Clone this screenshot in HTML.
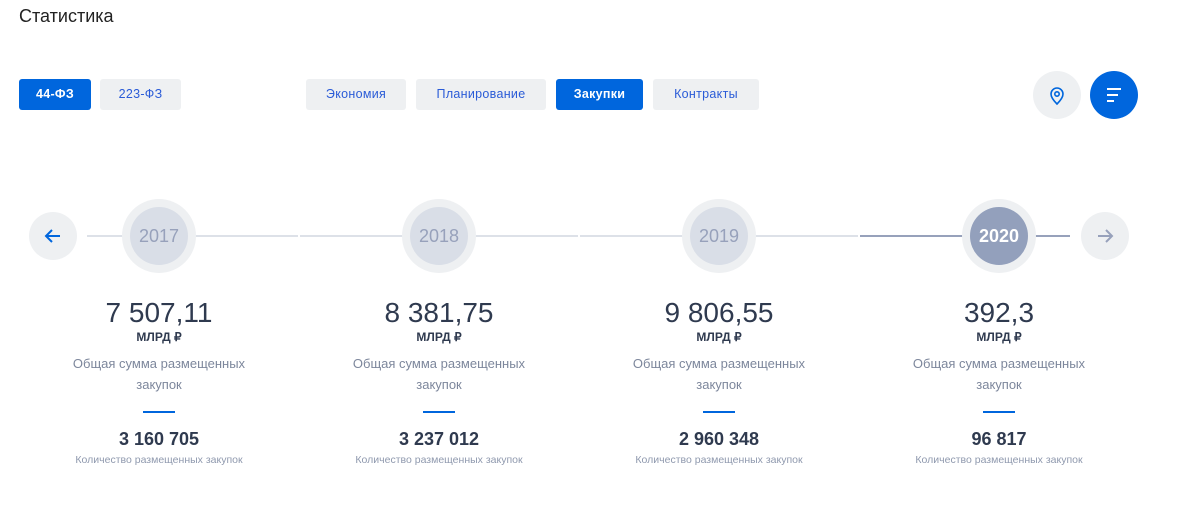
<!DOCTYPE html><html><head><style>
body{margin:0;width:1188px;height:506px;background:#fff;font-family:"Liberation Sans",Arial,sans-serif;position:relative;overflow:hidden}
.a{position:absolute}
.btn{position:absolute;top:79px;height:31px;line-height:31px;text-align:center;font-size:12.5px;border-radius:3px;background:#eef0f2;color:#2a5bd7;letter-spacing:0.3px}
.on{background:#0066dd;color:#fff;font-weight:bold}
.rc{position:absolute;width:48px;height:48px;border-radius:50%;background:#eef0f2}
.ln{position:absolute;top:235px;height:2px;background:#dde1e8}
.yo{position:absolute;top:199px;width:74px;height:74px;border-radius:50%;background:#eef0f2}
.yi{position:absolute;left:8px;top:8px;width:58px;height:58px;border-radius:50%;background:#d9dee7;color:#97a1bb;font-size:18px;line-height:58px;text-align:center}
.col{position:absolute;top:296px;width:280px;text-align:center}
.v{font-size:28px;color:#2f3a4f;line-height:34px}
.u{font-size:12px;font-weight:bold;color:#2f3a4f}
.d{font-size:13px;color:#7d879c;line-height:21px;margin-top:9px}
.bar{width:32px;height:2px;background:#0066dd;margin:16px auto 0}
.n{font-size:18px;font-weight:bold;color:#2f3a4f;margin-top:16px}
.c{font-size:10.5px;color:#8f99ae;margin-top:4px}
</style></head><body>
<div class="a" style="left:19px;top:6px;font-size:18px;color:#222">Статистика</div>
<div class="btn on" style="left:19px;width:72px">44-ФЗ</div>
<div class="btn" style="left:100px;width:81px">223-ФЗ</div>
<div class="btn" style="left:306px;width:100px">Экономия</div>
<div class="btn" style="left:416px;width:130px">Планирование</div>
<div class="btn on" style="left:556px;width:87px">Закупки</div>
<div class="btn" style="left:653px;width:106px">Контракты</div>
<div class="rc" style="left:1033px;top:71px"><svg width="48" height="48"><path d="M24 33c-4-4-6-7-6-10a6 6 0 0 1 12 0c0 3-2 6-6 10z" fill="none" stroke="#0066dd" stroke-width="1.6"/><circle cx="24" cy="23" r="2.2" fill="none" stroke="#0066dd" stroke-width="1.6"/></svg></div>
<div class="rc" style="left:1090px;top:71px;background:#0066dd"><svg width="48" height="48"><path d="M17 18h14M17 24h11M17 30h7" stroke="#fff" stroke-width="2"/></svg></div>
<div class="ln" style="left:87px;width:211px"></div>
<div class="ln" style="left:300px;width:278px"></div>
<div class="ln" style="left:580px;width:278px"></div>
<div class="ln" style="left:860px;width:210px;background:#97a1bb"></div>
<div class="rc" style="left:29px;top:212px"><svg width="48" height="48"><path d="M31 24H17M23 18l-6 6 6 6" fill="none" stroke="#0066dd" stroke-width="2"/></svg></div>
<div class="rc" style="left:1081px;top:212px"><svg width="48" height="48"><path d="M17 24h14M25 18l6 6-6 6" fill="none" stroke="#97a1bb" stroke-width="2"/></svg></div>
<div class="yo" style="left:122px"><div class="yi">2017</div></div>
<div class="yo" style="left:402px"><div class="yi">2018</div></div>
<div class="yo" style="left:682px"><div class="yi">2019</div></div>
<div class="yo" style="left:962px"><div class="yi" style="background:#93a0bc;color:#fff;font-weight:bold">2020</div></div>
<div class="col" style="left:19px"><div class="v">7 507,11</div><div class="u">МЛРД ₽</div><div class="d">Общая сумма размещенных<br>закупок</div><div class="bar"></div><div class="n">3 160 705</div><div class="c">Количество размещенных закупок</div></div>
<div class="col" style="left:299px"><div class="v">8 381,75</div><div class="u">МЛРД ₽</div><div class="d">Общая сумма размещенных<br>закупок</div><div class="bar"></div><div class="n">3 237 012</div><div class="c">Количество размещенных закупок</div></div>
<div class="col" style="left:579px"><div class="v">9 806,55</div><div class="u">МЛРД ₽</div><div class="d">Общая сумма размещенных<br>закупок</div><div class="bar"></div><div class="n">2 960 348</div><div class="c">Количество размещенных закупок</div></div>
<div class="col" style="left:859px"><div class="v">392,3</div><div class="u">МЛРД ₽</div><div class="d">Общая сумма размещенных<br>закупок</div><div class="bar"></div><div class="n">96 817</div><div class="c">Количество размещенных закупок</div></div>
</body></html>
